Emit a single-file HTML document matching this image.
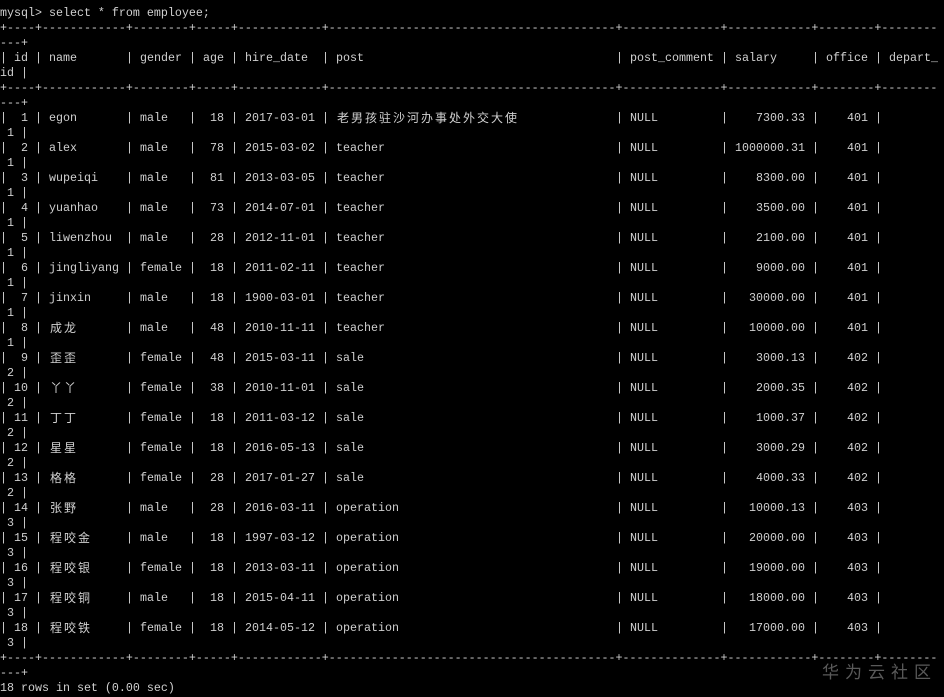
<!DOCTYPE html>
<html><head><meta charset="utf-8"><style>
html,body{margin:0;padding:0;background:#000;width:944px;height:697px;overflow:hidden}
#t{position:absolute;left:0;top:6px;color:#d0d0d0;font-family:"Liberation Mono","Noto Sans CJK SC",monospace;font-size:11.667px;line-height:15px;white-space:normal}
.l{height:15px;white-space:pre;overflow:hidden;width:944px}
.l span{display:inline-block;overflow:hidden;vertical-align:top;white-space:pre}
.a{width:35px}.b{width:91px}.c{width:63px}.d{width:42px}.e{width:91px}.f{width:294px}.g{width:105px}.h{width:91px}.i{width:63px}.j{width:70px}
.l span.z{display:inline-block;width:14px;height:15px;line-height:14px;text-align:center;font-family:"Noto Sans CJK SC",sans-serif;font-size:12px}
#w{position:absolute;left:822px;top:658px;color:#5a5a5a;font-family:"Noto Sans CJK SC",sans-serif;font-size:17px;letter-spacing:6px}
</style></head><body>
<div id="t">
<div class="l">mysql&gt; select * from employee;</div>
<div class="l">+----+------------+--------+-----+------------+-----------------------------------------+--------------+------------+--------+--------</div>
<div class="l">---+</div>
<div class="l"><span class="a">| id </span><span class="b">| name</span><span class="c">| gender</span><span class="d">| age</span><span class="e">| hire_date</span><span class="f">| post</span><span class="g">| post_comment</span><span class="h">| salary</span><span class="i">| office</span><span class="j">| depart_</span></div>
<div class="l">id |</div>
<div class="l">+----+------------+--------+-----+------------+-----------------------------------------+--------------+------------+--------+--------</div>
<div class="l">---+</div>
<div class="l"><span class="a">|  1 </span><span class="b">| egon</span><span class="c">| male</span><span class="d">|  18</span><span class="e">| 2017-03-01</span><span class="f">| <span class="z">老</span><span class="z">男</span><span class="z">孩</span><span class="z">驻</span><span class="z">沙</span><span class="z">河</span><span class="z">办</span><span class="z">事</span><span class="z">处</span><span class="z">外</span><span class="z">交</span><span class="z">大</span><span class="z">使</span></span><span class="g">| NULL</span><span class="h">|    7300.33</span><span class="i">|    401</span><span class="j">|</span></div>
<div class="l"> 1 |</div>
<div class="l"><span class="a">|  2 </span><span class="b">| alex</span><span class="c">| male</span><span class="d">|  78</span><span class="e">| 2015-03-02</span><span class="f">| teacher</span><span class="g">| NULL</span><span class="h">| 1000000.31</span><span class="i">|    401</span><span class="j">|</span></div>
<div class="l"> 1 |</div>
<div class="l"><span class="a">|  3 </span><span class="b">| wupeiqi</span><span class="c">| male</span><span class="d">|  81</span><span class="e">| 2013-03-05</span><span class="f">| teacher</span><span class="g">| NULL</span><span class="h">|    8300.00</span><span class="i">|    401</span><span class="j">|</span></div>
<div class="l"> 1 |</div>
<div class="l"><span class="a">|  4 </span><span class="b">| yuanhao</span><span class="c">| male</span><span class="d">|  73</span><span class="e">| 2014-07-01</span><span class="f">| teacher</span><span class="g">| NULL</span><span class="h">|    3500.00</span><span class="i">|    401</span><span class="j">|</span></div>
<div class="l"> 1 |</div>
<div class="l"><span class="a">|  5 </span><span class="b">| liwenzhou</span><span class="c">| male</span><span class="d">|  28</span><span class="e">| 2012-11-01</span><span class="f">| teacher</span><span class="g">| NULL</span><span class="h">|    2100.00</span><span class="i">|    401</span><span class="j">|</span></div>
<div class="l"> 1 |</div>
<div class="l"><span class="a">|  6 </span><span class="b">| jingliyang</span><span class="c">| female</span><span class="d">|  18</span><span class="e">| 2011-02-11</span><span class="f">| teacher</span><span class="g">| NULL</span><span class="h">|    9000.00</span><span class="i">|    401</span><span class="j">|</span></div>
<div class="l"> 1 |</div>
<div class="l"><span class="a">|  7 </span><span class="b">| jinxin</span><span class="c">| male</span><span class="d">|  18</span><span class="e">| 1900-03-01</span><span class="f">| teacher</span><span class="g">| NULL</span><span class="h">|   30000.00</span><span class="i">|    401</span><span class="j">|</span></div>
<div class="l"> 1 |</div>
<div class="l"><span class="a">|  8 </span><span class="b">| <span class="z">成</span><span class="z">龙</span></span><span class="c">| male</span><span class="d">|  48</span><span class="e">| 2010-11-11</span><span class="f">| teacher</span><span class="g">| NULL</span><span class="h">|   10000.00</span><span class="i">|    401</span><span class="j">|</span></div>
<div class="l"> 1 |</div>
<div class="l"><span class="a">|  9 </span><span class="b">| <span class="z">歪</span><span class="z">歪</span></span><span class="c">| female</span><span class="d">|  48</span><span class="e">| 2015-03-11</span><span class="f">| sale</span><span class="g">| NULL</span><span class="h">|    3000.13</span><span class="i">|    402</span><span class="j">|</span></div>
<div class="l"> 2 |</div>
<div class="l"><span class="a">| 10 </span><span class="b">| <span class="z">丫</span><span class="z">丫</span></span><span class="c">| female</span><span class="d">|  38</span><span class="e">| 2010-11-01</span><span class="f">| sale</span><span class="g">| NULL</span><span class="h">|    2000.35</span><span class="i">|    402</span><span class="j">|</span></div>
<div class="l"> 2 |</div>
<div class="l"><span class="a">| 11 </span><span class="b">| <span class="z">丁</span><span class="z">丁</span></span><span class="c">| female</span><span class="d">|  18</span><span class="e">| 2011-03-12</span><span class="f">| sale</span><span class="g">| NULL</span><span class="h">|    1000.37</span><span class="i">|    402</span><span class="j">|</span></div>
<div class="l"> 2 |</div>
<div class="l"><span class="a">| 12 </span><span class="b">| <span class="z">星</span><span class="z">星</span></span><span class="c">| female</span><span class="d">|  18</span><span class="e">| 2016-05-13</span><span class="f">| sale</span><span class="g">| NULL</span><span class="h">|    3000.29</span><span class="i">|    402</span><span class="j">|</span></div>
<div class="l"> 2 |</div>
<div class="l"><span class="a">| 13 </span><span class="b">| <span class="z">格</span><span class="z">格</span></span><span class="c">| female</span><span class="d">|  28</span><span class="e">| 2017-01-27</span><span class="f">| sale</span><span class="g">| NULL</span><span class="h">|    4000.33</span><span class="i">|    402</span><span class="j">|</span></div>
<div class="l"> 2 |</div>
<div class="l"><span class="a">| 14 </span><span class="b">| <span class="z">张</span><span class="z">野</span></span><span class="c">| male</span><span class="d">|  28</span><span class="e">| 2016-03-11</span><span class="f">| operation</span><span class="g">| NULL</span><span class="h">|   10000.13</span><span class="i">|    403</span><span class="j">|</span></div>
<div class="l"> 3 |</div>
<div class="l"><span class="a">| 15 </span><span class="b">| <span class="z">程</span><span class="z">咬</span><span class="z">金</span></span><span class="c">| male</span><span class="d">|  18</span><span class="e">| 1997-03-12</span><span class="f">| operation</span><span class="g">| NULL</span><span class="h">|   20000.00</span><span class="i">|    403</span><span class="j">|</span></div>
<div class="l"> 3 |</div>
<div class="l"><span class="a">| 16 </span><span class="b">| <span class="z">程</span><span class="z">咬</span><span class="z">银</span></span><span class="c">| female</span><span class="d">|  18</span><span class="e">| 2013-03-11</span><span class="f">| operation</span><span class="g">| NULL</span><span class="h">|   19000.00</span><span class="i">|    403</span><span class="j">|</span></div>
<div class="l"> 3 |</div>
<div class="l"><span class="a">| 17 </span><span class="b">| <span class="z">程</span><span class="z">咬</span><span class="z">铜</span></span><span class="c">| male</span><span class="d">|  18</span><span class="e">| 2015-04-11</span><span class="f">| operation</span><span class="g">| NULL</span><span class="h">|   18000.00</span><span class="i">|    403</span><span class="j">|</span></div>
<div class="l"> 3 |</div>
<div class="l"><span class="a">| 18 </span><span class="b">| <span class="z">程</span><span class="z">咬</span><span class="z">铁</span></span><span class="c">| female</span><span class="d">|  18</span><span class="e">| 2014-05-12</span><span class="f">| operation</span><span class="g">| NULL</span><span class="h">|   17000.00</span><span class="i">|    403</span><span class="j">|</span></div>
<div class="l"> 3 |</div>
<div class="l">+----+------------+--------+-----+------------+-----------------------------------------+--------------+------------+--------+--------</div>
<div class="l">---+</div>
<div class="l">18 rows in set (0.00 sec)</div>
</div>
<div id="w">华为云社区</div>
</body></html>
